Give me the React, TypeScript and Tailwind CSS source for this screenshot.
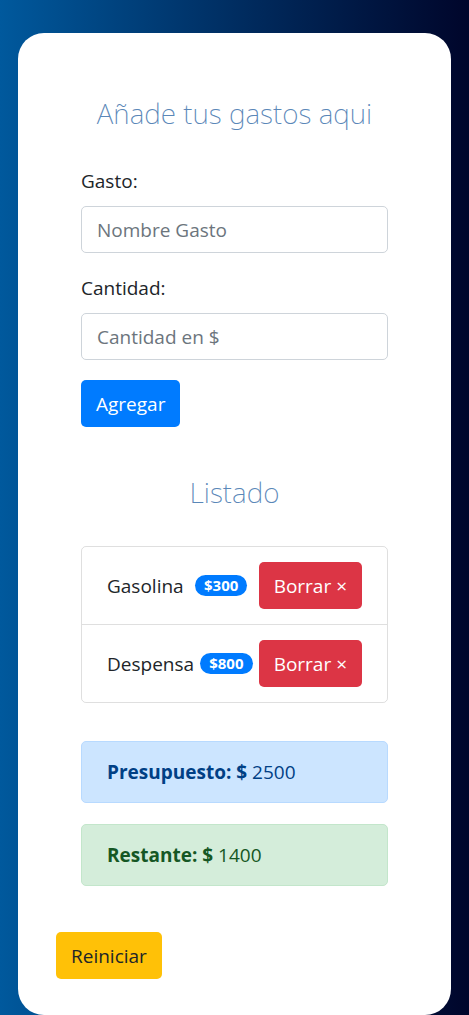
const gastos = [
  { id: 1, nombre: 'Gasolina', cantidad: 300 },
  { id: 2, nombre: 'Despensa', cantidad: 800 },
]

export default function App() {
  return (
    <div
      className="min-h-[1015px] bg-linear-to-r from-[#00599d] to-[#00062b] px-[18px] pt-[33px] text-[19px] leading-[30px] text-[#212529]"
      style={{ fontFamily: '"Open Sans", "Noto Sans", sans-serif' }}
    >
      <div className="rounded-[26px] bg-white px-[38px] pt-[60px] pb-[36px]">
        <div className="px-[25px]">
          {/* Formulario */}
          <h2
            className="whitespace-nowrap text-center text-[28px] leading-[41px] font-extralight text-[#5a87b8]"
            style={{ fontFamily: '"Noto Sans", sans-serif' }}
          >
            Añade tus gastos aqui
          </h2>

          <form className="mt-[32px]" onSubmit={(e) => e.preventDefault()}>
            <div className="mb-[20px]">
              <label className="mb-[10px] block">Gasto:</label>
              <input
                type="text"
                placeholder="Nombre Gasto"
                className="block h-[47px] w-full rounded-[5px] border border-[#ced4da] px-[15px] placeholder:text-[#6c757d] focus:outline-none"
              />
            </div>
            <div className="mb-[20px]">
              <label className="mb-[10px] block">Cantidad:</label>
              <input
                type="number"
                placeholder="Cantidad en $"
                className="block h-[47px] w-full rounded-[5px] border border-[#ced4da] px-[15px] placeholder:text-[#6c757d] focus:outline-none"
              />
            </div>
            <button
              type="submit"
              className="h-[47px] rounded-[5px] bg-[#007bff] px-[15px] text-white"
            >
              Agregar
            </button>
          </form>

          {/* Listado */}
          <h2
            className="mt-[45px] text-center text-[28px] leading-[41px] font-extralight text-[#5a87b8]"
            style={{ fontFamily: '"Noto Sans", sans-serif' }}
          >
            Listado
          </h2>

          <ul className="mt-[33px] rounded-[5px] border border-black/[0.125]">
            {gastos.map((gasto, i) => (
              <li
                key={gasto.id}
                className={`flex items-center justify-between px-[25px] py-[15px] ${i > 0 ? 'border-t border-black/[0.125]' : ''}`}
              >
                <span>{gasto.nombre}</span>
                <span className="rounded-full bg-[#007bff] px-[9px] py-[3px] text-[15px] leading-[15px] font-bold text-white">
                  ${gasto.cantidad}
                </span>
                <button className="h-[47px] rounded-[5px] bg-[#dc3545] px-[15px] text-white">
                  Borrar &times;
                </button>
              </li>
            ))}
          </ul>

          <div className="mt-[38px] rounded-[5px] border border-[#b8daff] bg-[#cce5ff] px-[25px] py-[15px] text-[#004085]">
            <span className="font-bold">Presupuesto: $</span> 2500
          </div>
          <div className="mt-[21px] rounded-[5px] border border-[#c3e6cb] bg-[#d4edda] px-[25px] py-[15px] text-[#155724]">
            <span className="font-bold">Restante: $</span> 1400
          </div>
        </div>

        <button className="mt-[46px] h-[47px] rounded-[5px] bg-[#ffc107] px-[15px] text-[#212529]">
          Reiniciar
        </button>
      </div>
    </div>
  )
}
